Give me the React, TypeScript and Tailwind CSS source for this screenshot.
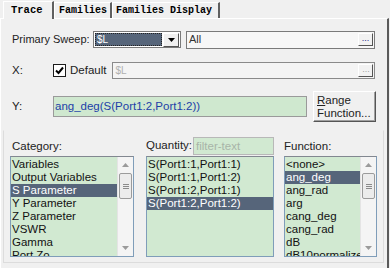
import React from "react"

const ui = { fontFamily: '"Liberation Sans", Arial, sans-serif' }
const mono = { fontFamily: '"Liberation Mono", "Courier New", monospace' }

const categories = ["Variables", "Output Variables", "S Parameter", "Y Parameter", "Z Parameter", "VSWR", "Gamma", "Port Zo"]
const quantities = ["S(Port1:1,Port1:1)", "S(Port1:1,Port1:2)", "S(Port1:2,Port1:1)", "S(Port1:2,Port1:2)"]
const functions = ["<none>", "ang_deg", "ang_rad", "arg", "cang_deg", "cang_rad", "dB", "dB10normalize"]

const Scrollbar = () => (
    <div className="flex flex-col w-[16px] h-full bg-[#f4f4f4] border-l border-[#e4e4e4]">
        <div className="h-[16px] flex items-center justify-center">
            <svg width="7" height="4" viewBox="0 0 7 4"><path d="M0 4 L3.5 0 L7 4Z" fill="#9a9a9a" /></svg>
        </div>
        <div className="mx-[1px] h-[26px] bg-[#ececec] border border-[#9b9b9b] rounded-[2px] flex flex-col items-center justify-center gap-[1px]">
            <div className="w-[6px] h-[1px] bg-[#8a8a8a]" />
            <div className="w-[6px] h-[1px] bg-[#8a8a8a]" />
            <div className="w-[6px] h-[1px] bg-[#8a8a8a]" />
        </div>
        <div className="flex-1" />
        <div className="h-[16px] flex items-center justify-center">
            <svg width="7" height="4" viewBox="0 0 7 4"><path d="M0 0 L3.5 4 L7 0Z" fill="#9a9a9a" /></svg>
        </div>
    </div>
)

type ListProps = { items: string[], selected: number, scroll?: boolean, width: string }

const ListBox = ({ items, selected, scroll, width }: ListProps) => (
    <div className={`${width} h-[101px] flex border border-[#7f9db9] border-t-[#828790] bg-[#d1e9d1] overflow-hidden`}>
        <div className="flex-1 flex flex-col pt-[1px] overflow-hidden">
            {items.map((item, i) => (
                <div key={i} className={`h-[13px] shrink-0 leading-[13px] pl-[1px] text-[11.5px] whitespace-nowrap ${i === selected ? "bg-[#56657a] text-white" : "text-[#111]"}`}>
                    {item}
                </div>
            ))}
        </div>
        {scroll && <Scrollbar />}
    </div>
)

const DotsButton = ({ disabled }: { disabled?: boolean }) => (
    <div className={`w-[15px] h-[13px] mr-[1px] bg-[#f2f2f2] border border-[#fff] border-r-[#555] border-b-[#555] flex items-end justify-center text-[9px] leading-[9px] pb-[2px] ${disabled ? "text-[#a0a0a0]" : "text-[#1a1a8a]"}`}>
        ...
    </div>
)

export default function App() {
    return (
        <div className="w-[390px] h-[268px] bg-[#f0f0f0] overflow-hidden text-[11.5px] text-[#222] whitespace-nowrap" style={ui}>
            {/* tabs */}
            <div className="flex items-end h-[18px] pl-[3px]">
                <div className="h-[18px] w-[51px] flex items-center pl-[7px] text-[10.5px] font-semibold text-black bg-[#f0f0f0] border-l border-t border-white border-r-2 border-r-[#606060] relative z-10 -mb-[1px]" style={mono}>
                    Trace
                </div>
                <div className="h-[16px] w-[58px] flex items-center pl-[4px] text-[10px] font-semibold text-black border-l border-t border-white border-r-2 border-r-[#606060]" style={mono}>
                    Families
                </div>
                <div className="h-[16px] w-[108px] flex items-center pl-[3px] text-[10px] font-semibold text-black border-l border-t border-white border-r-2 border-r-[#606060]" style={mono}>
                    Families Display
                </div>
            </div>

            {/* panel */}
            <div className="h-[250px] border-t border-l border-white border-r-2 border-r-[#5a5a5a] mr-[1px] pt-[12px]">
                <div className="flex items-center h-[17px] pl-[11px]">
                    <span className="w-[81px] text-[11px]">Primary Sweep:</span>
                    <div className="w-[88px] h-[17px] flex items-center border border-[#7a7a7a] bg-white">
                        <div className="flex-1 h-[13px] ml-[1px] bg-[#56657a] text-white text-[10px] leading-[11px] pl-[1px] border border-dotted border-[#222]">$L</div>
                        <div className="w-[16px] h-[14px] mx-[1px] bg-[#f0f0f0] border border-white border-r-[#555] border-b-[#555] flex items-center justify-center">
                            <svg width="7" height="4" viewBox="0 0 7 4"><path d="M0 0 L3.5 4 L7 0Z" fill="#000" /></svg>
                        </div>
                    </div>
                    <div className="ml-[5px] w-[189px] h-[18px] flex items-center justify-between border border-[#7a7a7a] bg-[#f7f7f7]">
                        <span className="pl-[2px] text-[11px] text-[#333]">All</span>
                        <DotsButton />
                    </div>
                </div>

                <div className="flex items-center h-[17px] pl-[11px] mt-[14px]">
                    <span className="w-[41px]">X:</span>
                    <div className="w-[13px] h-[13px] border border-[#1c1c1c] bg-white flex items-center justify-center">
                        <svg width="9" height="9" viewBox="0 0 9 9"><path d="M1 4.5 L3.5 7 L8 1.5" stroke="#000" strokeWidth="2" fill="none" /></svg>
                    </div>
                    <span className="ml-[4px]">Default</span>
                    <div className="ml-[6px] w-[263px] h-[17px] flex items-center justify-between border border-[#8a8a8a] bg-[#f4f4f4]">
                        <span className="pl-[2px] text-[10px] text-[#b0b0b0]">$L</span>
                        <DotsButton disabled />
                    </div>
                </div>

                <div className="flex items-center pl-[11px] mt-[12px]">
                    <span className="w-[41px]">Y:</span>
                    <div className="w-[254px] h-[21px] flex items-center border border-[#9a9a9a] bg-[#cfe8cf] pl-[1px] text-[#1d3ea8] text-[11.5px]">
                        ang_deg(S(Port1:2,Port1:2))
                    </div>
                    <div className="ml-[6px] w-[63px] h-[31px] bg-[#f0f0f0] border border-white border-r-[#555] border-b-[#555] shadow-[inset_-1px_-1px_0_#a0a0a0] flex flex-col justify-center pl-[3px] leading-[13px] text-[11.5px]">
                        <span><span className="underline">R</span>ange</span>
                        <span>Function...</span>
                    </div>
                </div>

                {/* group */}
                <div className="mt-[8px] ml-[2px] mr-[3px] h-[133px] border border-[#dcdcdc] border-t-[#f0f0f0] pt-[6px] pl-[6px] flex gap-[12px]">
                    <div className="flex flex-col">
                        <div className="h-[18px] flex items-center pl-[2px] mt-[1px]">Category:</div>
                        <ListBox items={categories} selected={2} scroll width="w-[124px]" />
                    </div>
                    <div className="flex flex-col">
                        <div className="h-[18px] flex items-center">
                            <span>Quantity:</span>
                            <div className="ml-[1px] w-[81px] h-[18px] border border-[#b8b8b8] bg-[#d1e9d1] pl-[2px] text-[#a8b4a8] text-[11.5px] leading-[16px]">filter-text</div>
                        </div>
                        <div className="mt-[1px]"><ListBox items={quantities} selected={3} width="w-[128px]" /></div>
                    </div>
                    <div className="flex flex-col -ml-[2px]">
                        <div className="h-[18px] flex items-center mt-[1px]">Function:</div>
                        <ListBox items={functions} selected={1} scroll width="w-[93px]" />
                    </div>
                </div>
            </div>
        </div>
    )
}
